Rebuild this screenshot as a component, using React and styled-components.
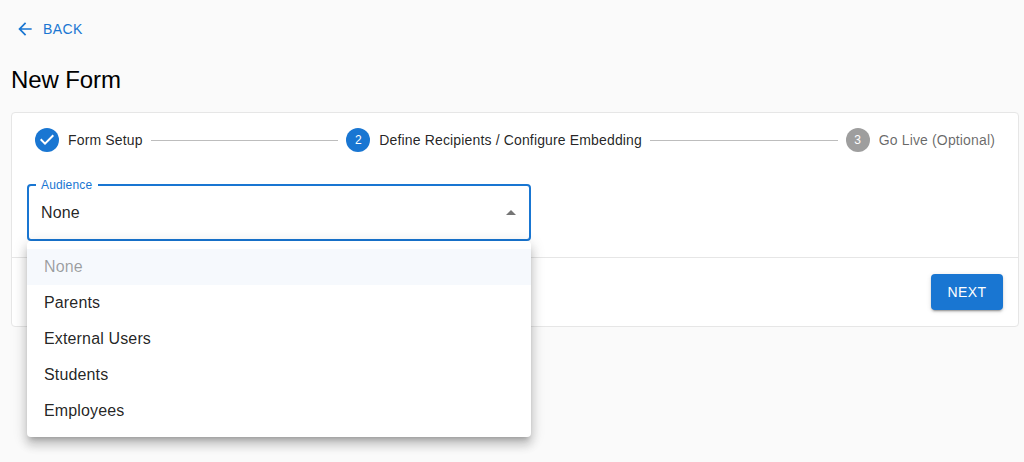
import React from "react";
import styled, { createGlobalStyle } from "styled-components";

const FONT = `"Liberation Sans", Arial, sans-serif`;

const Global = createGlobalStyle`
  html, body { margin: 0; padding: 0; background: #fafafa; }
  body { font-family: ${FONT}; color: rgba(0,0,0,0.87); }
  * { box-sizing: border-box; }
`;

const Page = styled.div`
  width: 1024px;
  height: 462px;
  padding: 11px 5px 0 11px;
  overflow: hidden;
`;
const BackButton = styled.button`
  display: flex;
  align-items: center;
  gap: 8px;
  height: 36px;
  margin-bottom: 14px;
  padding: 0 4px;
  border: 0;
  background: none;
  color: #1976d2;
  font: 400 14px/1.75 ${FONT};
  letter-spacing: 0.4px;
  text-transform: uppercase;
`;
const Title = styled.h1`
  margin: 0 0 14px;
  height: 37px;
  font-size: 24px;
  font-weight: 400;
  line-height: 37px;
  letter-spacing: -0.1px;
  color: #000;
`;
const Card = styled.section`
  position: relative;
  width: 1008px;
  height: 215px;
  background: #fff;
  border: 1px solid #e6e6e6;
  border-radius: 4px;
`;
const Stepper = styled.div`
  display: flex;
  align-items: center;
  padding: 15px 23px 0;
  height: 39px;
`;
const Step = styled.div`
  display: flex;
  align-items: center;
  gap: 9px;
  font-size: 14px;
  line-height: 20px;
  letter-spacing: 0.15px;
  white-space: nowrap;
  color: ${(p) => (p.$muted ? "rgba(0,0,0,0.6)" : "rgba(0,0,0,0.87)")};
`;
const StepNumber = styled.span`
  display: flex;
  align-items: center;
  justify-content: center;
  width: 24px;
  height: 24px;
  border-radius: 50%;
  background: ${(p) => (p.$muted ? "#9e9e9e" : "#1976d2")};
  color: #fff;
  font-size: 12px;
`;
const Connector = styled.div`
  flex: 1;
  height: 1px;
  margin: 0 8px;
  background: #bdbdbd;
`;
const Body = styled.div`
  padding: 32px 15px 16px;
  height: 106px;
  border-bottom: 1px solid #e6e6e6;
`;
const Field = styled.div`
  position: relative;
  display: flex;
  align-items: center;
  justify-content: space-between;
  width: 504px;
  height: 57px;
  padding: 0 6px 0 12px;
  border: 2px solid #1976d2;
  border-radius: 4px;
  font-size: 16px;
  letter-spacing: 0.15px;
`;
const FieldLabel = styled.span`
  position: absolute;
  left: 7px;
  top: -8px;
  padding: 0 6px 0 5px;
  background: #fff;
  color: #1976d2;
  font-size: 12px;
  line-height: 14px;
  letter-spacing: 0.15px;
`;
const Footer = styled.div`
  display: flex;
  justify-content: flex-end;
  padding: 16px 15px;
`;
const NextButton = styled.button`
  width: 72px;
  height: 36px;
  border: 0;
  border-radius: 4px;
  background: #1976d2;
  color: #fff;
  font: 400 14px/1.75 ${FONT};
  letter-spacing: 0.4px;
  text-transform: uppercase;
  box-shadow: 0 3px 1px -2px rgba(0,0,0,.2), 0 2px 2px 0 rgba(0,0,0,.14), 0 1px 5px 0 rgba(0,0,0,.12);
`;
const Menu = styled.ul`
  position: absolute;
  left: 15px;
  top: 128px;
  width: 504px;
  margin: 0;
  padding: 8px 0;
  list-style: none;
  background: #fff;
  border-radius: 4px;
  box-shadow: 0 5px 5px -3px rgba(0,0,0,.2), 0 8px 10px 1px rgba(0,0,0,.14), 0 3px 14px 2px rgba(0,0,0,.12);
`;
const MenuItem = styled.li`
  height: 36px;
  padding: 0 17px;
  font-size: 16px;
  line-height: 36px;
  letter-spacing: 0.15px;
  background: ${(p) => (p.$selected ? "#f6f9fd" : "transparent")};
  color: ${(p) => (p.$selected ? "rgba(0,0,0,0.38)" : "rgba(0,0,0,0.87)")};
`;

const ArrowBack = () => (
  <svg width="20" height="20" viewBox="0 0 24 24" fill="currentColor">
    <path d="M20 11H7.83l5.59-5.59L12 4l-8 8 8 8 1.41-1.41L7.83 13H20v-2z" />
  </svg>
);
const CheckCircle = () => (
  <svg width="24" height="24" viewBox="0 0 24 24">
    <circle cx="12" cy="12" r="12" fill="#1976d2" />
    <path fill="#fff" d="M10 17l-5-5 1.41-1.41L10 14.17l7.59-7.59L19 8l-9 9z" />
  </svg>
);
const ArrowUp = () => (
  <svg width="24" height="24" viewBox="0 0 24 24" fill="rgba(0,0,0,0.54)">
    <path d="M7 14l5-5 5 5z" />
  </svg>
);

const options = ["None", "Parents", "External Users", "Students", "Employees"];

export default function App() {
  return (
    <Page>
      <Global />
      <BackButton><ArrowBack />Back</BackButton>
      <Title>New Form</Title>
      <Card>
        <Stepper>
          <Step><CheckCircle />Form Setup</Step>
          <Connector />
          <Step><StepNumber>2</StepNumber>Define Recipients / Configure Embedding</Step>
          <Connector />
          <Step $muted><StepNumber $muted>3</StepNumber>Go Live (Optional)</Step>
        </Stepper>
        <Body>
          <Field>
            <FieldLabel>Audience</FieldLabel>
            None
            <ArrowUp />
          </Field>
        </Body>
        <Footer><NextButton>Next</NextButton></Footer>
        <Menu>
          {options.map((o, i) => (
            <MenuItem key={o} $selected={i === 0}>{o}</MenuItem>
          ))}
        </Menu>
      </Card>
    </Page>
  );
}
